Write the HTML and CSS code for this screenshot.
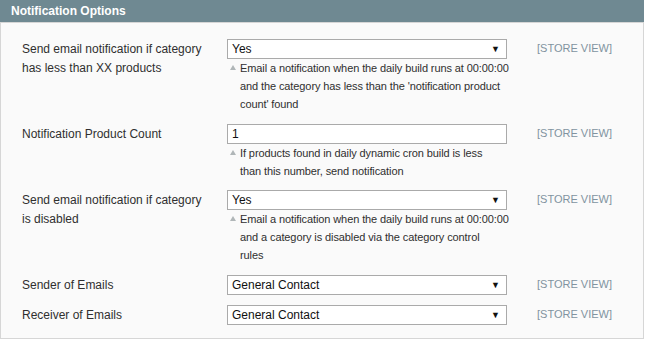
FILE: index.html
```html
<!DOCTYPE html>
<html lang="en">
<head>
    <meta charset="UTF-8">
    <title>Notification Options</title>
    <link rel="stylesheet" href="styles.css">
</head>
<body>
    <div class="section">
        <div class="section-head">Notification Options</div>
        <div class="section-body">
            <div class="form-list">
                <div class="label">Send email notification if category has less than XX products</div>
                <div class="value">
                    <div class="select"><span>Yes</span><span class="arrow">&#9660;</span></div>
                    <p class="note">Email a notification when the daily build runs at 00:00:00<br>and the category has less than the 'notification product<br>count' found</p>
                </div>
                <div class="scope">[STORE VIEW]</div>

                <div class="label">Notification Product Count</div>
                <div class="value">
                    <div class="input">1</div>
                    <p class="note">If products found in daily dynamic cron build is less<br>than this number, send notification</p>
                </div>
                <div class="scope">[STORE VIEW]</div>

                <div class="label">Send email notification if category is disabled</div>
                <div class="value">
                    <div class="select"><span>Yes</span><span class="arrow">&#9660;</span></div>
                    <p class="note">Email a notification when the daily build runs at 00:00:00<br>and a category is disabled via the category control<br>rules</p>
                </div>
                <div class="scope">[STORE VIEW]</div>

                <div class="label">Sender of Emails</div>
                <div class="value">
                    <div class="select"><span>General Contact</span><span class="arrow">&#9660;</span></div>
                </div>
                <div class="scope">[STORE VIEW]</div>

                <div class="label">Receiver of Emails</div>
                <div class="value">
                    <div class="select"><span>General Contact</span><span class="arrow">&#9660;</span></div>
                </div>
                <div class="scope">[STORE VIEW]</div>
            </div>
        </div>
    </div>
</body>
</html>
```
FILE: styles.css
```css
* {
    margin: 0;
    padding: 0;
    box-sizing: border-box;
}

body {
    font-family: "Liberation Sans", Arial, sans-serif;
    font-size: 12px;
    color: #2f2f2f;
    background: #ffffff;
    width: 645px;
}

.section {
    width: 644px;
}

.section-head {
    height: 23px;
    background: #6f8992;
    color: #ffffff;
    font-weight: bold;
    font-size: 12px;
    line-height: 22px;
    padding-left: 11px;
    border-bottom: 1px solid #d6d6d6;
}

.section-body {
    background: #fafafa;
    border: 1px solid #d6d6d6;
    border-top: none;
    padding: 16px 0 13px 21px;
}

.form-list {
    display: grid;
    grid-template-columns: 205px 280px 110px;
    row-gap: 10.5px;
}

.label {
    line-height: 19px;
    padding-top: 1px;
    padding-right: 20px;
}

.scope {
    color: #8193a0;
    font-size: 11px;
    line-height: 17px;
    padding-left: 30px;
    padding-top: 1px;
}

.select,
.input {
    height: 20px;
    background: #ffffff;
    border: 1px solid #aaaaaa;
    line-height: 18px;
    padding: 0 6px 0 4px;
    display: flex;
    justify-content: space-between;
    color: #111111;
}

.arrow {
    font-size: 9px;
    color: #111111;
}

.note {
    position: relative;
    font-size: 11px;
    line-height: 18px;
    letter-spacing: -0.1px;
    padding-left: 13px;
    white-space: nowrap;
    color: #2f2f2f;
}

.note::before {
    content: "";
    position: absolute;
    left: 3px;
    top: 6px;
    border-left: 3px solid transparent;
    border-right: 3px solid transparent;
    border-bottom: 5px solid #b0b6b8;
}
```
